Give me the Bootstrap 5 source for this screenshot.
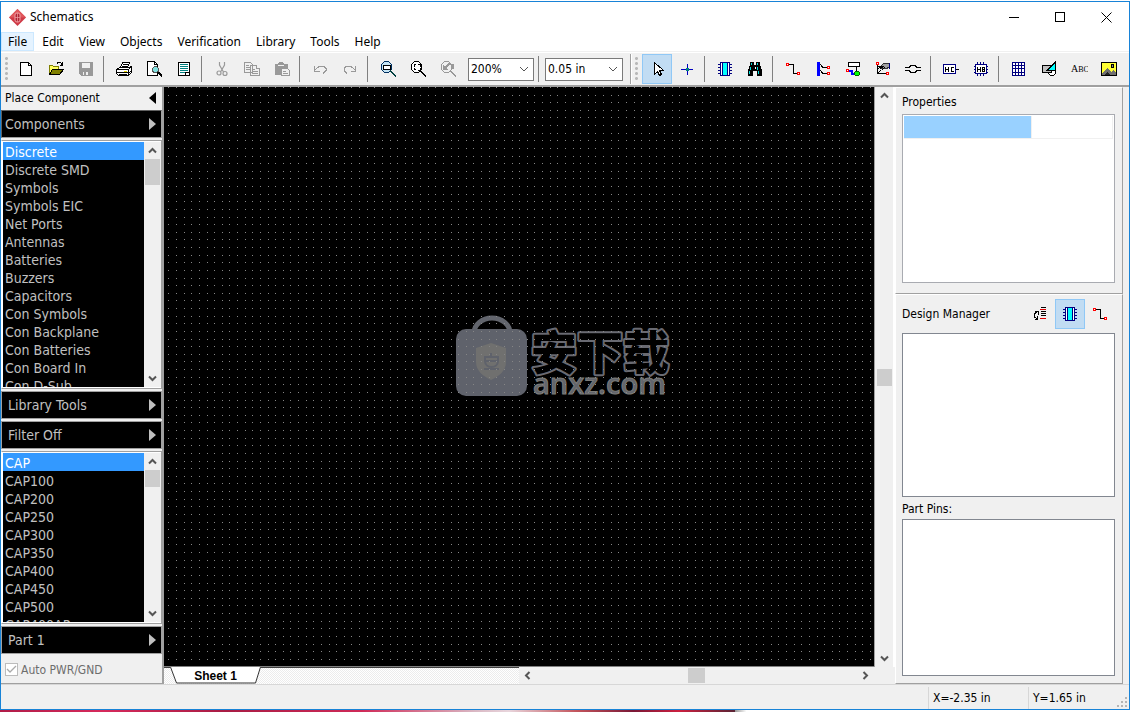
<!DOCTYPE html>
<html lang="en">
<head>
<meta charset="utf-8">
<meta name="viewport" content="width=device-width, initial-scale=1">
<title>Schematics</title>
<link href="https://cdn.jsdelivr.net/npm/bootstrap@5.3.0/dist/css/bootstrap.min.css" rel="stylesheet">
<style>
:root{--face:#f0f0f0;--edge:#a0a0a0;--accent:#1883d7}
body{font-family:"Noto Sans","Open Sans",sans-serif;font-size:12px;line-height:16px;color:#000;height:100vh;min-height:480px;overflow:hidden;
 padding:1px 1px 2px 0;background:linear-gradient(90deg,#b01c48 0,#d62a5c 9%,#a81c44 20%,#cf2a58 32%,#d9b8c4 42%,#e8d5dc 45%,#c2545c 51%,#7a1836 56%,#cc2040 60%,#5a2434 65%,#999 65%,#fff 66%) bottom/100% 2px no-repeat,#fff}
button{font:inherit;color:inherit}
svg{display:block;flex:none}
.px{shape-rendering:crispEdges}
.app-window{border:1px solid var(--accent);background:var(--face)}
.titlebar{height:30px;background:#fff}
.titlebar .caption{width:46px;height:28px;padding:0;border:0;background:none;display:grid;place-items:center}
.menubar{height:19px;background:#fff}
.menubar a{color:#000;text-decoration:none;padding:0 7px 0 8px;line-height:19px}
.menubar a.hot{background:#e5f3ff;box-shadow:inset 0 0 0 1px #cce8ff;padding:0 7px}
.toolbar{height:36px;border-bottom:2px solid var(--edge);padding-top:3px;position:relative;box-shadow:inset 0 1px var(--face),inset 0 2px #fff}
.tools-main{padding-left:4px;padding-right:7px}
.tools-main .grip{margin-right:3px}
.tools-place{border-left:1px solid var(--edge);box-shadow:inset 1px 0 #fff;padding-left:4px}
.tools-place .grip{margin-right:4px}
.tool{width:30px;height:30px;padding:0;border:1px solid transparent;background:none;display:grid;place-items:center;flex:none}
.tool.on{background:#c1dcf3;border-color:#90c8f6}
.split{width:8px;height:26px;flex:none;background:linear-gradient(#808080,#808080) 2px 0/1px 100% no-repeat}
.grip{width:3px;height:26px;flex:none;background:radial-gradient(circle,#b8b8b8 1px,transparent 2px) 0 0/3px 5px}
.combo{appearance:none;height:23px;border:1px solid #7a7a7a;border-radius:0;padding:0 2px;font-family:"DejaVu Sans Condensed","DejaVu Sans",sans-serif;font-size:12px;color:#000;
 background:#fff url("data:image/svg+xml,%3Csvg xmlns='http://www.w3.org/2000/svg' width='10' height='6'%3E%3Cpath d='M1 1l4 4 4-4' fill='none' stroke='%23555'/%3E%3C/svg%3E") right 4px center no-repeat}
.combo.scale{width:66px;margin:0 2px 0 5px}
.combo.step{width:78px;margin-left:1px}
.tahoma{font-family:"DejaVu Sans Condensed","DejaVu Sans",sans-serif}
.side{width:163px;border-right:2px solid var(--edge);border-bottom:1px solid var(--edge);gap:2px}
.side-head{height:23px;padding:0 6px 2px 4px}
.flyout{height:28px;border:1px solid #a0a0a0;background:#000;color:#c0c0c0;font-size:14px;padding:0 5px 0 6px;text-align:left}
.flyout.open{padding-left:3px;border-color:#606060 #a0a0a0 #a0a0a0 #606060}
.lib-list{background:#000;border:1px solid var(--edge);box-shadow:0 0 0 1px #fff inset;padding:1px 0 1px 1px;min-height:0;overflow:hidden;border-left-color:#fff}
.lib-list.tall{flex:125 1 0}
.lib-list.low{flex:86 1 0}
.lib-list ul{min-width:0;overflow:hidden}
.lib-list li button{display:block;width:100%;height:18px;line-height:20px;border:0;padding:0 2px;background:#000;color:#c0c0c0;font-size:14px;text-align:left;white-space:nowrap}
.lib-list li button.picked{background:#3399ff;color:#fff}
.sbar{background:var(--face);flex:none}
.sbar.v{width:17px}.sbar.h{height:17px}
.sbar button{width:17px;height:17px;border:0;padding:0;background:none;display:grid;place-items:center;flex:none}
.thumb{background:#cdcdcd;flex:none}
.v .thumb{width:15px;height:17px;margin-left:1px}.h .thumb{width:17px;height:15px}
.v .thumb.long{height:26px}
.auto-row{height:27px;color:#6d6d6d;padding-left:4px;gap:3px}
.tick{appearance:none;width:13px;height:13px;margin:0;border:1px solid #bcbcbc;background:#fff url("data:image/svg+xml,%3Csvg xmlns='http://www.w3.org/2000/svg' width='11' height='11'%3E%3Cpath d='M1 5l3 3 6-6' fill='none' stroke='%23aaa' stroke-width='1.3'/%3E%3C/svg%3E") center no-repeat}
.sheet{background:#000;border-bottom:1px solid #808080;overflow:hidden}
.watermark{position:absolute;left:41%;top:39%}
.tabs{flex:355 1 0;border-top:1px solid #404040;background:repeating-conic-gradient(#fff 0 25%,#ececec 0 50%) 0 0/2px 2px}
.tab{position:relative;width:91px;height:17px;margin:-1px 0 0 6px;border:0;padding:0;background:none;font:bold 12px/18px "Liberation Sans",sans-serif}
.tab svg{position:absolute;inset:0}
.tab span{position:relative}
.hwrap{flex:355 1 0}
.sbar.vwrap,.corner{width:21px}
.vwrap{border-left:1px solid var(--edge);border-right:2px solid #fff}
.dock{width:234px;padding-right:6px}
.pane{border:1px solid;border-color:#fff var(--edge) var(--edge) #fff;padding:0 7px 7px 6px}
.pane h2{font-size:12px;line-height:16px;margin:0;font-weight:400}
.pane .head-props{padding:6px 0 4px}
.pane .head-pins{padding:4px 0 2px}
.well{background:#fff;border:1px solid #828790}
.well.parts{flex:164 1 0}.well.pins{flex:157 1 0}
.props{height:169px;padding:1px;margin-bottom:3px;border-color:#a9abb1}
.props td{height:22px;padding:0;border:1px solid var(--face);border-top:0}
.props td.sel{background:#99d1ff;width:127px;border-left:0}
.status{height:25px;border-top:1px solid #d7d7d7}
.status div{border-left:1px solid #d7d7d7;padding-left:4px;height:22px;line-height:22px;margin-top:2px;width:101px}
.status div:first-child{width:100px}
</style>
</head>
<body class="d-flex flex-column">
<svg width="0" height="0" class="position-absolute" aria-hidden="true">
 <defs>
  <symbol id="chip" viewBox="0 0 16 16"><path d="M1 3.5h14M1 6.5h14M1 9.5h14M1 12.5h14" stroke="#000080"/><path d="M3.5 1.500h9v13h-9z" fill="#fff" stroke="#000080"/><path d="M6 2h4v12H6z" fill="#0ff"/><path d="M5.500 2v12M10.500 2v12" stroke="#000080"/></symbol>
  <symbol id="wire" viewBox="0 0 16 16"><path d="M3 3.500h5.500v9h4" fill="none" stroke="#000"/><path d="M1.500 2.500h2v2h-2zM12.500 11.500h2v2h-2z" fill="#fff" stroke="#f00"/></symbol>
  <symbol id="up" viewBox="0 0 9 9"><path d="M1 6.500l3.500-3.500 3.500 3.500" fill="none" stroke="#555" stroke-width="2"/></symbol>
  <symbol id="down" viewBox="0 0 9 9"><path d="M1 2.500l3.500 3.500 3.500-3.500" fill="none" stroke="#555" stroke-width="2"/></symbol>
 </defs>
</svg>
<div class="app-window d-flex flex-column flex-grow-1">
 <header class="titlebar d-flex align-items-center">
  <svg class="ms-2 me-1" width="17" height="17" viewBox="0 0 17 17"><path d="M8.500 0L17 8.500 8.500 17 0 8.500z" fill="#cf3a46"/><path d="M8.500 0L17 8.500H0z" fill="#e0575c"/><rect x="6" y="4" width="5" height="9" rx="2" fill="#b02434" stroke="#f0a0a4"/><path d="M8.500 4v9M6 8.500h5" stroke="#f0a0a4" stroke-width=".7"/></svg>
  <span>Schematics</span>
  <div class="ms-auto d-flex">
   <button class="caption" aria-label="Minimize"><svg class="px" width="11" height="11"><path d="M0 5.500h10" stroke="#000"/></svg></button>
   <button class="caption" aria-label="Maximize"><svg class="px" width="11" height="11"><path d="M.5 .5h9v9h-9z" fill="none" stroke="#000"/></svg></button>
   <button class="caption" aria-label="Close"><svg width="11" height="11"><path d="M.5 .5l10 10M10.500 .5l-10 10" stroke="#000"/></svg></button>
  </div>
 </header>
 <nav class="menubar d-flex">
  <a class="hot" href="#">File</a><a href="#">Edit</a><a href="#">View</a><a href="#">Objects</a><a href="#">Verification</a><a href="#">Library</a><a href="#">Tools</a><a href="#">Help</a>
 </nav>
 <div class="toolbar d-flex align-items-start">
  <div class="tools-main d-flex align-items-center">
  <span class="grip"></span>
  <button class="tool" title="New"><svg class="px" width="16" height="16"><path d="M2.500 1.500h8l3 3v10h-11z" fill="#fff" stroke="#000"/><path d="M10.500 1.500v3h3" fill="none" stroke="#000"/></svg></button>
  <button class="tool" title="Open"><svg class="px" width="16" height="16"><path d="M1.500 12.500v-8h3l1 1h5v3" fill="#ffff60" stroke="#808000"/><path d="M1.500 13.500l3-5h11l-4 5z" fill="#808000" stroke="#000"/><path d="M9 2.500c2-2 4-1 5 1M14.500 1v3h-3" fill="none" stroke="#000"/></svg></button>
  <button class="tool" title="Save"><svg class="px" width="16" height="16"><path d="M1 1h14v14H3l-2-2z" fill="#999"/><path d="M4 2h8v5H4zM5 11h5v3H5z" fill="#f0f0f0"/><path d="M6 11h2v3H6zM13 2h1v1h-1z" fill="#999"/></svg></button>
  <span class="split"></span>
  <button class="tool" title="Print"><svg class="px" width="16" height="16"><path d="M4.500 6.500l2-5h7l-2 5" fill="#fff" stroke="#000"/><path d="M7 3.500h5M6 5.500h5" stroke="#000"/><path d="M.5 8.500l3-2h9l3-1v6l-3 3h-10l-2-2z" fill="#fff" stroke="#000"/><path d="M1 8.500h11l3-2M12.500 9v5M1 11.500h11M13 12l3-3" stroke="#000" fill="none"/><path d="M3 13.500h8" stroke="#000"/><path d="M8 10h3v1H8z" fill="#e6d800"/></svg></button>
  <button class="tool" title="Print preview"><svg class="px" width="17" height="16"><path d="M1.500 .5h7l3 3v11h-10z" fill="#fff" stroke="#000"/><path d="M8.500 .5v3h3" fill="none" stroke="#000"/><circle cx="9.500" cy="8.500" r="3" fill="#80e0e0" stroke="#555"/><path d="M11.500 11l4.500 4" stroke="#000" stroke-width="2"/></svg></button>
  <button class="tool" title="Titles"><svg class="px" width="16" height="16"><path d="M2.500 1.500h11v13h-11z" fill="#fff" stroke="#000"/><path d="M4 3.500h8M4 5.500h8M4 7.500h8M4 9.500h8M4 11.500h5" stroke="#008080"/><path d="M9.500 14v-2.500H13" fill="none" stroke="#000"/></svg></button>
  <span class="split"></span>
  <button class="tool" title="Cut"><svg width="16" height="16" fill="none" stroke="#999" stroke-width="1.200"><path d="M5.500 1v3l4 7M10.500 1v3l-4 7"/><circle cx="5" cy="12" r="2"/><circle cx="11" cy="12.500" r="2"/></svg></button>
  <button class="tool" title="Copy"><svg class="px" width="16" height="16" fill="#f0f0f0" stroke="#999"><path d="M.5 1.500h6l2 2v8h-8zM6.500 4.500h6l3 3v7h-9z"/><path d="M2 4.500h3M2 6.500h4M2 8.500h4M8 8.500h3M8 10.500h6M8 12.500h6M12.500 4.500v3h3"/></svg></button>
  <button class="tool" title="Paste"><svg class="px" width="17" height="16"><path d="M1 3h3l1-2h4l1 2h4v11H1z" fill="#999"/><path d="M4 4h6" stroke="#f0f0f0"/><path d="M7.500 7.500h6l2 2v5h-8z" fill="#f0f0f0" stroke="#999"/><path d="M9 10.500h3M9 12.500h5" stroke="#999"/></svg></button>
  <span class="split"></span>
  <button class="tool" title="Undo"><svg class="px" width="16" height="16" fill="none" stroke="#999"><path d="M2.500 5v5h5M3 9l4-3.500h5l2 2v2l-3 3"/></svg></button>
  <button class="tool" title="Redo"><svg class="px" width="16" height="16" fill="none" stroke="#999"><path d="M13.500 5v5h-5M13 9L9 5.500H4l-2 2v2l3 3"/></svg></button>
  <span class="split"></span>
  <button class="tool" title="Zoom window"><svg class="px" width="17" height="16"><circle cx="6.500" cy="6" r="5.500" fill="#c5e4f4" stroke="#003060"/><path d="M3.500 4.500h7v4h-7z" fill="#fff" stroke="#000"/><path d="M10 9.500l6 6" stroke="#004040" stroke-width="2"/></svg></button>
  <button class="tool" title="Zoom extents"><svg class="px" width="17" height="16"><circle cx="6.500" cy="6" r="5.500" fill="#fff" stroke="#000"/><path d="M4 5.500V3.500h2M8 3.500h2v2M10 7v2H8M6 8.500H4V7" fill="none" stroke="#000"/><path d="M10 9.500l6 6" stroke="#000" stroke-width="2"/></svg></button>
  <button class="tool" title="Undo zoom"><svg class="px" width="17" height="16"><circle cx="6.500" cy="6" r="5.500" fill="#f0f0f0" stroke="#999"/><path d="M3 4v5h5z" fill="#999"/><path d="M5 7l4-4 4 1v4" fill="none" stroke="#999" stroke-width="1.500"/><path d="M10 9.500l6 6" stroke="#999" stroke-width="2"/></svg></button>
  <select class="combo scale" aria-label="Scale"><option>200%</option></select>
  <span class="split"></span>
  <select class="combo step" aria-label="Grid"><option>0.05 in</option></select>
  </div>
  <div class="tools-place d-flex align-items-center">
  <span class="grip"></span>
  <button class="tool on" title="Default mode"><svg class="px" width="16" height="16"><path d="M5.500 1.500v12l3-3 2 4 2-1-2-4h4z" fill="#fff" stroke="#000"/></svg></button>
  <button class="tool" title="Origin"><svg class="px" width="16" height="16"><path d="M2 8.500h12M8.500 3v11" stroke="#0000c0"/><path d="M7 7h3v3H7z" fill="#008080"/></svg></button>
  <span class="split"></span>
  <button class="tool" title="Place component"><svg class="px" width="16" height="16"><use href="#chip"/></svg></button>
  <button class="tool" title="Find"><svg class="px" width="16" height="16"><path d="M3 1h4v3h2V1h4v3l2 5v6h-5v-5H6v5H1V9l2-5z" fill="#000"/><path d="M4 2h1v2H4zM10 2h1v2h-1zM3 6h1v3H3zM10 6h1v3h-1zM2 10h1v3H2zM11 10h1v3h-1z" fill="#0dd"/><path d="M7.500 6h1v2h-1z" fill="#fff"/></svg></button>
  <span class="split"></span>
  <button class="tool" title="Wire"><svg class="px" width="16" height="16"><use href="#wire"/></svg></button>
  <button class="tool" title="Bus connections"><svg class="px" width="16" height="16"><path d="M2 1h3v14H2z" fill="#00f"/><path d="M5 3l3 3.500h4M5 9l3 3.500h4" fill="none" stroke="#000"/><path d="M12.500 5.500h2v2h-2zM12.500 11.500h2v2h-2z" fill="#fff" stroke="#f00"/></svg></button>
  <button class="tool" title="Bus"><svg class="px" width="16" height="16"><path d="M3.500 1.500h11v4h-11z" fill="#fff" stroke="#000"/><path d="M11.500 6v5" stroke="#000"/><path d="M3 9.500h4v3h4" fill="none" stroke="#00f" stroke-width="2"/><path d="M1.500 8.500h2v2h-2z" fill="#fff" stroke="#f00"/><circle cx="12" cy="12.500" r="2.500" fill="#0f0" stroke="#006000"/></svg></button>
  <button class="tool" title="Page connector"><svg class="px" width="16" height="16"><path d="M2.500 3v9.500h10M3 12l3-3" stroke="#000" fill="none"/><path d="M6 5l3-3h5v4l-3 2-5-1z" fill="#a0a0a0" stroke="#333"/><path d="M3 6l3-1M3 8l4-3M5 8l4-3M7 9l3-3" stroke="#000"/><path d="M14.500 1.500v6" stroke="#000080"/><path d="M1.500 1.500h2v2h-2zM11.500 11.500h2v2h-2z" fill="#fff" stroke="#f00"/></svg></button>
  <button class="tool" title="Net port"><svg class="px" width="16" height="16"><path d="M0 6.500h4l2-2h4l2 2h4M0 9.500h4l2 2h4l2-2h4" fill="none" stroke="#000"/></svg></button>
  <span class="split"></span>
  <button class="tool" title="Hierarchy connector"><svg class="px" width="16" height="16"><path d="M.5 3.500h12v9H.5z" fill="#fff" stroke="#000080"/><path d="M13 8.500h3M2.500 6v5M5.500 6v5M3 8.500h3M11 6.500H8.500v4H11" stroke="#000" fill="none"/></svg></button>
  <button class="tool" title="Hierarchy block"><svg class="px" width="16" height="16"><path d="M4.500 1v14M7.500 1v14M10.500 1v14M1 5.500h14M1 8.500h14M1 11.500h14" stroke="#000080"/><path d="M2.500 3.500h11v9h-11z" fill="#fff" stroke="#000080"/><path d="M4.500 6v5M7.500 6v5M5 8.500h3M9.500 6v5M11.500 6v5M9 6.500h2M9 10.500h2M9 8.500h2" stroke="#000" fill="none"/></svg></button>
  <span class="split"></span>
  <button class="tool" title="Table"><svg class="px" width="16" height="16"><path d="M1.500 1.500h12v13h-12z" fill="#fff" stroke="#000080"/><path d="M4.500 2v13M7.500 2v13M10.500 2v13M2 4.500h12M2 7.500h12M2 11.500h12" stroke="#000080"/></svg></button>
  <button class="tool" title="Shapes"><svg class="px" width="16" height="16"><circle cx="11" cy="11" r="3.500" fill="#fff" stroke="#000"/><path d="M1.500 4.500h9v7h-9z" fill="#c0c0c0" stroke="#000"/><path d="M14.500 1v8h-8z" fill="#0ff" stroke="#000"/></svg></button>
  <button class="tool" title="Text"><svg width="18" height="16"><text x="1" y="11" font-family="Liberation Serif" font-size="10">A<tspan font-size="8">BC</tspan></text></svg></button>
  <button class="tool" title="Picture"><svg class="px" width="16" height="16"><path d="M.5 1.500h15v13H.5z" fill="#ff3" stroke="#000"/><path d="M1 14v-2l5-5 4 4 2-2 3 3v2z" fill="#707070"/><path d="M3 14l3-3 3 3z" fill="#222"/><circle cx="11.500" cy="5" r="1.500" fill="#888" stroke="#000"/></svg></button>
  </div>
 </div>

 <main class="d-flex flex-grow-1" style="min-height:0">
  <aside class="side d-flex flex-column tahoma flex-shrink-0">
   <div class="d-flex flex-column">
    <div class="side-head d-flex align-items-center justify-content-between">Place Component <svg width="7" height="12"><path d="M7 0v12L0 6z"/></svg></div>
    <button class="flyout open d-flex align-items-center justify-content-between">Components <svg width="7" height="12"><path d="M0 0v12l7-6z" fill="#c0c0c0"/></svg></button>
   </div>
   <div class="lib-list tall d-flex">
    <ul class="list-unstyled m-0 flex-grow-1">
     <li><button class="picked">Discrete</button></li><li><button>Discrete SMD</button></li><li><button>Symbols</button></li><li><button>Symbols EIC</button></li><li><button>Net Ports</button></li><li><button>Antennas</button></li><li><button>Batteries</button></li><li><button>Buzzers</button></li><li><button>Capacitors</button></li><li><button>Con Symbols</button></li><li><button>Con Backplane</button></li><li><button>Con Batteries</button></li><li><button>Con Board In</button></li><li><button>Con D-Sub</button></li>
    </ul>
    <div class="sbar v d-flex flex-column"><button aria-label="Scroll up"><svg width="9" height="9"><use href="#up"/></svg></button><div class="thumb long"></div><button class="mt-auto" aria-label="Scroll down"><svg width="9" height="9"><use href="#down"/></svg></button></div>
   </div>
   <button class="flyout d-flex align-items-center justify-content-between">Library Tools <svg width="7" height="12"><path d="M0 0v12l7-6z" fill="#c0c0c0"/></svg></button>
   <button class="flyout d-flex align-items-center justify-content-between">Filter Off <svg width="7" height="12"><path d="M0 0v12l7-6z" fill="#c0c0c0"/></svg></button>
   <div class="lib-list low d-flex">
    <ul class="list-unstyled m-0 flex-grow-1">
     <li><button class="picked">CAP</button></li><li><button>CAP100</button></li><li><button>CAP200</button></li><li><button>CAP250</button></li><li><button>CAP300</button></li><li><button>CAP350</button></li><li><button>CAP400</button></li><li><button>CAP450</button></li><li><button>CAP500</button></li><li><button>CAP400AP</button></li>
    </ul>
    <div class="sbar v d-flex flex-column"><button aria-label="Scroll up"><svg width="9" height="9"><use href="#up"/></svg></button><div class="thumb"></div><button class="mt-auto" aria-label="Scroll down"><svg width="9" height="9"><use href="#down"/></svg></button></div>
   </div>
   <button class="flyout d-flex align-items-center justify-content-between">Part 1 <svg width="7" height="12"><path d="M0 0v12l7-6z" fill="#c0c0c0"/></svg></button>
   <div class="auto-row d-flex align-items-center"><input class="tick" type="checkbox" id="auto" checked disabled><label for="auto">Auto PWR/GND</label></div>
  </aside>

  <section class="d-flex flex-column flex-grow-1" style="min-width:0">
   <div class="d-flex flex-grow-1">
    <div class="sheet position-relative flex-grow-1">
     <svg class="watermark" width="224" height="92" viewBox="0 -2 224 92">
      <path d="M19 18a18 15 0 0 1 36 0" fill="none" stroke="#62656d" stroke-width="5"/>
      <rect x="1" y="14" width="71" height="67" rx="10" fill="#5f626b"/>
      <path d="M36 28l15 5v14c0 9-7 14-15 18-8-4-15-9-15-18V33z" fill="#70706f"/>
      <path d="M30 42h13v4c0 8-13 8-13 0zM30 46h13M29 54h15M36 38v4" fill="none" stroke="#5f626b" stroke-width="2"/>
      <text x="76" y="54" font-family="Noto Sans CJK SC, sans-serif" font-weight="900" font-size="46" fill="#000" stroke="#696a72" stroke-width="4" stroke-linejoin="round" paint-order="stroke">安下载</text>
      <text x="78" y="79" font-family="Open Sans, sans-serif" font-weight="600" font-size="29" fill="#62656d" stroke="#7c7c78" stroke-width="1">anxz.com</text>
     </svg>
     <svg class="position-absolute top-0 start-0 w-100 h-100 px">
      <defs><pattern id="grid" x="4" y="0" width="61" height="61" patternUnits="userSpaceOnUse"><path d="M0 .5h61M0 8.500h61M0 15.500h61M0 23.500h61M0 30.500h61M0 38.500h61M0 46.500h61M0 53.500h61" stroke="#868686" stroke-dasharray="1 7 1 7 1 6 1 7 1 7 1 6 1 7 1 6"/></pattern></defs>
      <rect width="100%" height="100%" fill="url(#grid)"/>
     </svg>
    </div>
    <div class="vwrap sbar v d-flex flex-column align-items-center justify-content-between"><button aria-label="Scroll up"><svg width="9" height="9"><use href="#up"/></svg></button><div class="thumb"></div><button aria-label="Scroll down"><svg width="9" height="9"><use href="#down"/></svg></button></div>
   </div>
   <div class="d-flex">
    <div class="tabs"><button class="tab"><svg width="91" height="17"><path d="M0 0h91l-5 16H6z" fill="#fff"/><path d="M.5 0l6 16h79l5-16" fill="none" stroke="#333"/></svg><span>Sheet 1</span></button></div>
    <div class="hwrap sbar h d-flex align-items-center justify-content-between"><button aria-label="Scroll left"><svg width="9" height="9"><path d="M6.500 1L3 4.500 6.500 8" fill="none" stroke="#555" stroke-width="2"/></svg></button><div class="thumb"></div><button aria-label="Scroll right"><svg width="9" height="9"><path d="M2.500 1L6 4.500 2.500 8" fill="none" stroke="#555" stroke-width="2"/></svg></button></div>
    <div class="corner"></div>
   </div>
  </section>

  <aside class="dock d-flex flex-column tahoma flex-shrink-0">
   <div class="pane">
    <h2 class="head-props">Properties</h2>
    <div class="well props"><table class="w-100"><tbody><tr><td class="sel"></td><td></td></tr></tbody></table></div>
   </div>
   <div class="pane d-flex flex-column flex-grow-1">
    <div class="d-flex align-items-center pt-1 pb-1"><h2 class="me-auto">Design Manager</h2>
     <button class="tool" title="Refresh"><svg class="px" width="16" height="16"><path d="M8 3.500h6M8 12.500h6" stroke="#d00"/><path d="M9 1.500h5M9 5.500h5M9 7.500h5M9 9.500h5M3 5.500h3v3M4.500 6L2.500 8v3l3 2M5.500 10v3H3" fill="none" stroke="#000"/></svg></button>
     <button class="tool on" title="Components"><svg class="px" width="16" height="16"><use href="#chip"/></svg></button>
     <button class="tool" title="Nets"><svg class="px" width="16" height="16"><use href="#wire"/></svg></button>
    </div>
    <div class="well parts"></div>
    <h2 class="head-pins">Part Pins:</h2>
    <div class="well pins"></div>
   </div>
  </aside>
 </main>
 <footer class="status d-flex justify-content-end tahoma">
  <div>X=-2.35 in</div><div class="position-relative">Y=1.65 in<svg class="position-absolute bottom-0 end-0 px" width="13" height="13"><path d="M9 1h2v2H9zM5 5h2v2H5zM9 5h2v2H9zM1 9h2v2H1zM5 9h2v2H5zM9 9h2v2H9z" fill="#b5b5b5"/></svg></div>
 </footer>
</div>
<script src="https://cdn.jsdelivr.net/npm/bootstrap@5.3.0/dist/js/bootstrap.bundle.min.js"></script>
</body>
</html>
